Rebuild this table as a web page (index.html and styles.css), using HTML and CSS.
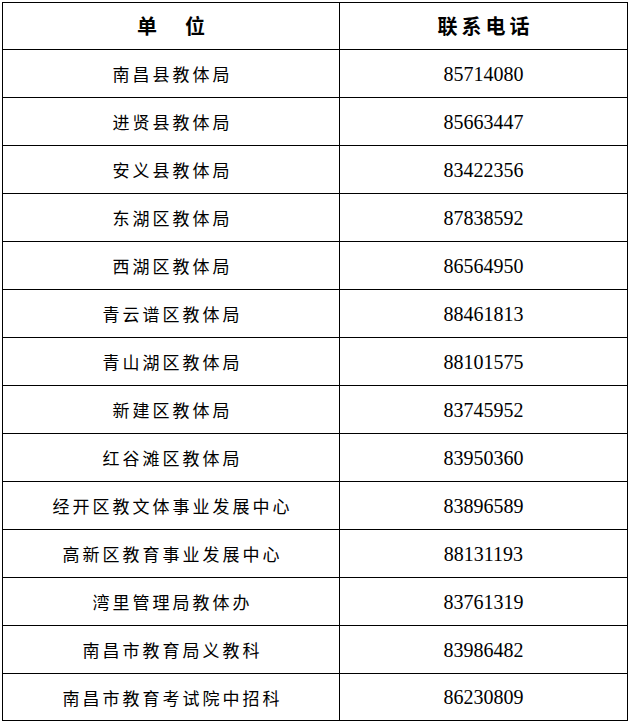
FILE: index.html
```html
<!DOCTYPE html>
<html lang="zh-CN">
<head>
<meta charset="utf-8">
<title>联系电话</title>
<link rel="stylesheet" href="styles.css">
</head>
<body>
<div class="wrap">
<table class="contacts">
<colgroup><col class="c-unit"><col class="c-tel"></colgroup>
<thead>
<tr class="head"><th class="unit-h"><span>单</span><span>位</span></th><th>联系电话</th></tr>
</thead>
<tbody>
<tr><td class="unit">南昌县教体局</td><td class="tel">85714080</td></tr>
<tr><td class="unit">进贤县教体局</td><td class="tel">85663447</td></tr>
<tr><td class="unit">安义县教体局</td><td class="tel">83422356</td></tr>
<tr><td class="unit">东湖区教体局</td><td class="tel">87838592</td></tr>
<tr><td class="unit">西湖区教体局</td><td class="tel">86564950</td></tr>
<tr><td class="unit">青云谱区教体局</td><td class="tel">88461813</td></tr>
<tr><td class="unit">青山湖区教体局</td><td class="tel">88101575</td></tr>
<tr><td class="unit">新建区教体局</td><td class="tel">83745952</td></tr>
<tr><td class="unit">红谷滩区教体局</td><td class="tel">83950360</td></tr>
<tr><td class="unit">经开区教文体事业发展中心</td><td class="tel">83896589</td></tr>
<tr><td class="unit">高新区教育事业发展中心</td><td class="tel">88131193</td></tr>
<tr><td class="unit">湾里管理局教体办</td><td class="tel">83761319</td></tr>
<tr><td class="unit">南昌市教育局义教科</td><td class="tel">83986482</td></tr>
<tr class="last"><td class="unit">南昌市教育考试院中招科</td><td class="tel">86230809</td></tr>
</tbody>
</table>
</div>
</body>
</html>
```
FILE: styles.css
```css
html, body {
  margin: 0;
  padding: 0;
  background: #fff;
}
.wrap {
  padding: 2px 0 0 2px;
}
.contacts {
  border-collapse: collapse;
  table-layout: fixed;
  width: 625px;
  color: #000;
}
.c-unit { width: 337px; }
.c-tel { width: 288px; }
.contacts th,
.contacts td {
  border: 1px solid #000;
  padding: 0;
  text-align: center;
  vertical-align: middle;
}
.contacts th {
  height: 46px;
  font-family: "Noto Sans CJK SC", sans-serif;
  font-weight: 700;
  font-size: 20px;
  letter-spacing: 4px;
  text-indent: 4px;
  line-height: 1;
}
.unit-h span + span {
  margin-left: 24px;
}
.contacts td {
  height: 47px;
  line-height: 1;
}
.contacts .last td {
  height: 46px;
}
.unit {
  font-family: "Noto Sans CJK SC", sans-serif;
  font-size: 17px;
  letter-spacing: 3px;
  text-indent: 3px;
  font-weight: 400;
}
.tel {
  font-family: "Liberation Serif", "Times New Roman", serif;
  font-size: 20px;
}
```
